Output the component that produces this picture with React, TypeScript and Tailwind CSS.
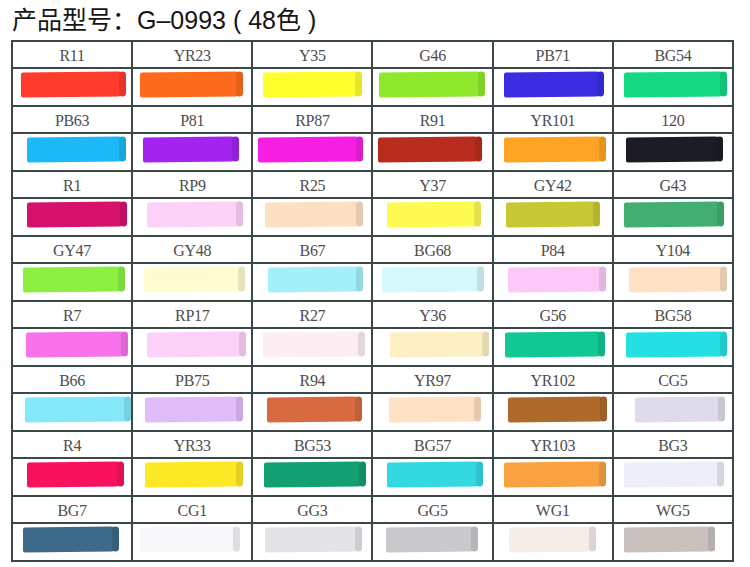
import React from 'react';

type Swatch = {
  code: string;
  color: string;
  left: number;
  width: number;
};

// [code, colour, left offset, stroke width]
const ROWS: [string, string, number, number][][] = [
  [
    ['R11', '#ff3b2c', 8, 105],
    ['YR23', '#ff6b1c', 7, 103],
    ['Y35', '#ffff2e', 10, 99],
    ['G46', '#8fe82c', 6, 106],
    ['PB71', '#3b2ce2', 10, 100],
    ['BG54', '#14d882', 10, 103],
  ],
  [
    ['PB63', '#1cb8f8', 14, 99],
    ['P81', '#a224ee', 10, 96],
    ['RP87', '#f61ee2', 5, 105],
    ['R91', '#b82c1e', 5, 104],
    ['YR101', '#ffa324', 10, 102],
    ['120', '#1c1d24', 12, 97],
  ],
  [
    ['R1', '#d6116c', 14, 100],
    ['RP9', '#fcd2f8', 14, 96],
    ['R25', '#fde0c2', 12, 98],
    ['Y37', '#fdfb52', 14, 94],
    ['GY42', '#c8c834', 12, 94],
    ['G43', '#42ae72', 10, 100],
  ],
  [
    ['GY47', '#8cef42', 10, 102],
    ['GY48', '#fffcd2', 11, 101],
    ['B67', '#a4f0fa', 15, 95],
    ['BG68', '#d4f8fc', 9, 102],
    ['P84', '#fcc8f8', 14, 98],
    ['Y104', '#fde2c4', 15, 98],
  ],
  [
    ['R7', '#f872ea', 13, 102],
    ['RP17', '#fcd2f8', 14, 99],
    ['R27', '#fdeef4', 10, 102],
    ['Y36', '#fdf0c4', 17, 99],
    ['G56', '#12c892', 11, 100],
    ['BG58', '#24e0e2', 12, 101],
  ],
  [
    ['B66', '#84e8f8', 12, 106],
    ['PB75', '#e2bcf8', 12, 98],
    ['R94', '#d86a42', 14, 95],
    ['YR97', '#fde2c4', 16, 92],
    ['YR102', '#ae6a2a', 14, 99],
    ['CG5', '#dedcec', 21, 90],
  ],
  [
    ['R4', '#f8125c', 14, 97],
    ['YR33', '#fce824', 12, 98],
    ['BG53', '#12a072', 11, 102],
    ['BG57', '#34d8e0', 14, 96],
    ['YR103', '#f8a242', 10, 102],
    ['BG3', '#eceef8', 10, 100],
  ],
  [
    ['BG7', '#3c6a88', 10, 96],
    ['CG1', '#f8f8fa', 7, 100],
    ['GG3', '#e4e4e8', 12, 97],
    ['GG5', '#c9c9cd', 13, 92],
    ['WG1', '#f5ede9', 15, 87],
    ['WG5', '#c9c1bd', 10, 91],
  ],
];

const SWATCHES: Swatch[] = ROWS.flat().map(([code, color, left, width]) => ({
  code,
  color,
  left,
  width,
}));

const Cell: React.FC<{ swatch: Swatch }> = ({ swatch }) => (
  <div className="flex flex-col gap-[2px] bg-[#3b4848]">
    <div className="h-[25px] bg-white flex items-end justify-center pb-[3px] text-[16px] leading-none text-[#4d4d4d] [font-family:'Liberation_Serif','Times_New_Roman',serif] tracking-[-0.3px]">
      {swatch.code}
    </div>
    <div className="h-[36px] bg-white pt-[3px]">
      <div
        className="relative h-[25px] rounded-l-[2px] rounded-r-[8px] -skew-y-[0.6deg]"
        style={{ marginLeft: swatch.left, width: swatch.width, backgroundColor: swatch.color }}
      >
        <div
          className="absolute right-0 top-0 h-full w-[7px] rounded-full brightness-90"
          style={{ backgroundColor: swatch.color }}
        />
      </div>
    </div>
  </div>
);

const App: React.FC = () => {
  return (
    <div className="w-[750px] h-[567px] bg-white overflow-hidden">
      <h1 className="h-[40px] pl-[12px] flex items-center whitespace-pre text-[25px] leading-none text-[#151515] [font-family:'Liberation_Sans','Noto_Sans_CJK_SC',sans-serif] font-normal">
        产品型号：G–0993 ( 48色 )
      </h1>
      <div className="ml-[11px] w-[723px] grid grid-cols-6 gap-[2px] p-[2px] bg-[#3b4848]">
        {SWATCHES.map((swatch) => (
          <Cell key={swatch.code} swatch={swatch} />
        ))}
      </div>
    </div>
  );
};

export default App;
